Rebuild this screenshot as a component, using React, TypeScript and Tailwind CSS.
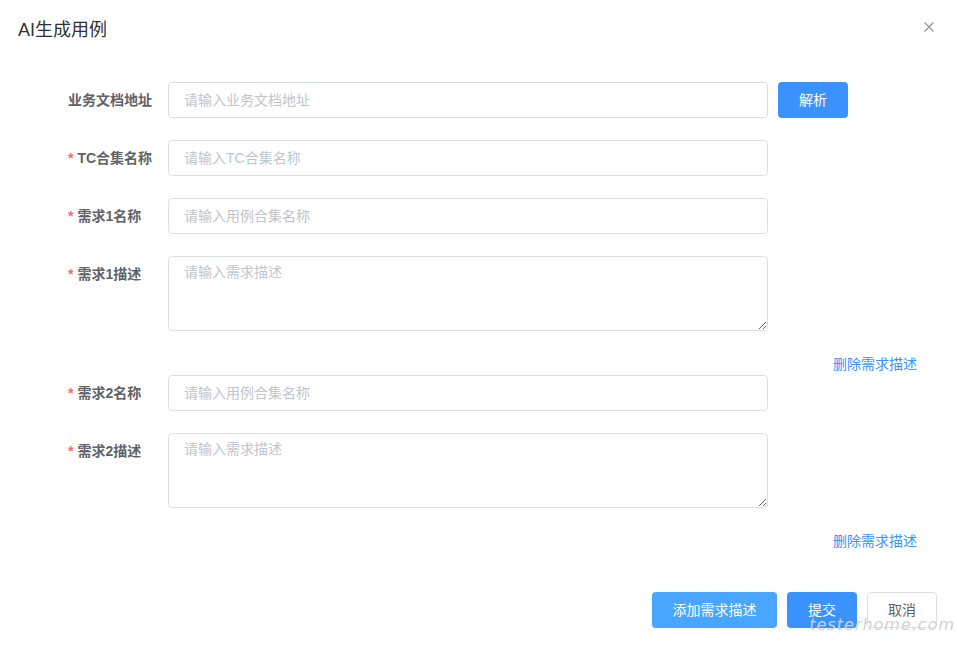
import React from 'react';

const FONT = '"Liberation Sans", "Noto Sans CJK SC", sans-serif';

interface FieldProps {
    label: string;
    required?: boolean;
    children: React.ReactNode;
}

const Field: React.FC<FieldProps> = ({ label, required, children }) => (
    <div className="flex mb-[22px]">
        <div className="w-[100px] shrink-0 h-[36px] flex items-center text-sm font-bold text-[#606266]">
            {required && <span className="text-[#f56c6c] mr-1">*</span>}
            {label}
        </div>
        {children}
    </div>
);

const inputCls =
    'w-[600px] h-[36px] px-[15px] text-sm text-[#606266] border border-[#dcdfe6] rounded-[4px] outline-none placeholder:text-[#c0c4cc] bg-white';
const areaCls =
    'w-[600px] h-[75px] px-[15px] py-[5px] text-sm leading-[21px] text-[#606266] border border-[#dcdfe6] rounded-[4px] outline-none placeholder:text-[#c0c4cc] bg-white block';

const DeleteLink = () => (
    <div className="h-[22px] flex items-center justify-end">
        <span className="text-sm text-[#3a92fd] cursor-pointer">删除需求描述</span>
    </div>
);

export default function App() {
    return (
        <div className="relative w-[957px] h-[645px] bg-white overflow-hidden" style={{ fontFamily: FONT }}>
            {/* Header */}
            <div className="flex justify-between pl-[18px] pr-[20px] pt-[18px] h-[54px] items-start">
                <span className="text-lg leading-6 text-[#303133]">AI生成用例</span>
                <button className="mt-[1px] text-[#909399]">
                    <svg width="16" height="16" viewBox="0 0 16 16">
                        <path d="M3.5 3.5 L12.5 12.5 M12.5 3.5 L3.5 12.5" stroke="currentColor" strokeWidth="1.2" />
                    </svg>
                </button>
            </div>

            {/* Body */}
            <div className="pt-[28px] pl-[68px] w-[917px]">
                <div className="flex mb-[22px]">
                    <div className="w-[100px] shrink-0 h-[36px] flex items-center text-sm font-bold text-[#606266]">
                        业务文档地址
                    </div>
                    <input className={inputCls} placeholder="请输入业务文档地址" />
                    <button className="ml-[10px] w-[70px] h-[36px] rounded-[4px] bg-[#3a92fe] text-white text-sm">
                        解析
                    </button>
                </div>
                <Field label="TC合集名称" required>
                    <input className={inputCls} placeholder="请输入TC合集名称" />
                </Field>
                <Field label="需求1名称" required>
                    <input className={inputCls} placeholder="请输入用例合集名称" />
                </Field>
                <Field label="需求1描述" required>
                    <textarea className={areaCls} placeholder="请输入需求描述" />
                </Field>
                <DeleteLink />
                <Field label="需求2名称" required>
                    <input className={inputCls} placeholder="请输入用例合集名称" />
                </Field>
                <Field label="需求2描述" required>
                    <textarea className={areaCls} placeholder="请输入需求描述" />
                </Field>
                <DeleteLink />
            </div>

            {/* Footer */}
            <div className="flex justify-end gap-[10px] pr-[20px] pt-[40px]">
                <button className="w-[125px] h-[36px] rounded-[4px] bg-[#48a6fe] text-white text-sm">添加需求描述</button>
                <button className="w-[70px] h-[36px] rounded-[4px] bg-[#3a92fe] text-white text-sm">提交</button>
                <button className="w-[70px] h-[36px] rounded-[4px] border border-[#dcdfe6] bg-white text-[#606266] text-sm">取消</button>
            </div>

            {/* Watermark */}
            <div
                className="absolute right-[2px] bottom-[8px] text-[16px] tracking-[1px] text-[#d2d2d2] italic font-extralight pointer-events-none"
                style={{ fontFamily: '"DejaVu Sans", sans-serif' }}
            >
                testerhome.com
            </div>
        </div>
    );
}
